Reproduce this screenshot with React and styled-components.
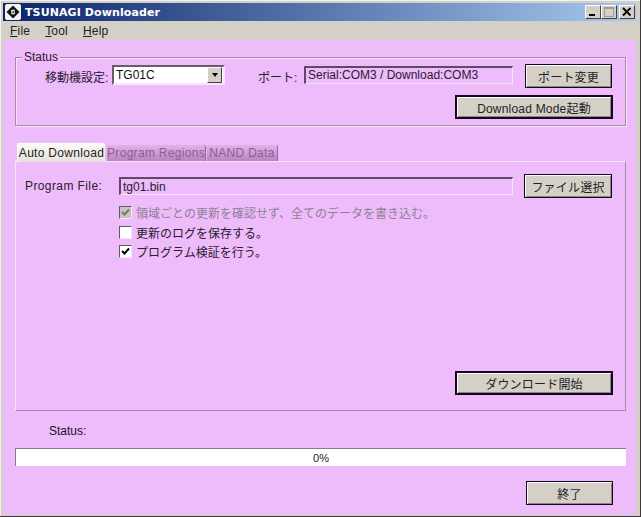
import React from "react";
import styled, { createGlobalStyle } from "styled-components";

const Global = createGlobalStyle`
  html, body { margin: 0; padding: 0; background: #d4d0c8; }
  * { box-sizing: border-box; }
  body { font-family: "Liberation Sans", "Noto Sans CJK JP", sans-serif; font-size: 12px; color: #1a1020; }
`;

const Window = styled.div`
  width: 641px; height: 517px; display: flex; flex-direction: column;
  background: #d4d0c8; padding: 3px 5px 2px 3px;
  box-shadow: inset -1px -1px 0 #3c3838, inset 1px 1px 0 #f4f2ee;
`;
const TitleBar = styled.div`
  height: 18px; flex: none; display: flex; align-items: center; padding: 0 1px 0 1px;
  background: linear-gradient(90deg, #0a246a 0%, #a6caf0 100%);
`;
const TitleText = styled.span`
  font-family: "DejaVu Sans", sans-serif; font-weight: 700; font-size: 11px; color: #fff; margin-left: 3px; letter-spacing: 0.1px;
`;
const Controls = styled.div`
  margin-left: auto; display: flex; align-items: center; margin-right: 0;
`;
const CtlBtn = styled.div`
  width: 16px; height: 14px; margin-left: ${p => p.$gap || 0}px; background: #d4d0c8;
  border: 1px solid; border-color: #fff #404040 #404040 #fff;
  display: flex; align-items: center; justify-content: center;
`;
const MenuBar = styled.div`
  height: 19px; flex: none; display: flex; align-items: center; gap: 15px; padding-left: 7px; background: #d4d0c8;
`;
const MenuItem = styled.span`
  letter-spacing: 0.2px; color: #222;
`;
const Client = styled.div`
  flex: 1; display: flex; flex-direction: column; background: #eebbfb; padding: 17px 10px 10px 12px;
`;
const Group = styled.div`
  position: relative; height: 69px; flex: none; padding: 6px 12px 0 29px;
  border: 1px solid #a58aa8; box-shadow: inset 1px 1px 0 #f8e4fd, 1px 1px 0 #f8e4fd;
`;
const Legend = styled.span`
  position: absolute; left: 6px; top: -7px; padding: 0 2px; background: #eebbfb; line-height: 13px; color: #2a2030;
`;
const StatusRow = styled.div`
  display: flex; align-items: center; height: 24px;
`;
const RightRow = styled.div`
  display: flex; justify-content: flex-end; margin-top: 7px;
`;
const FieldLabel = styled.span`
  width: ${p => p.$w}px; flex: none; white-space: nowrap; color: #2a2030; margin-left: ${p => p.$ml || 0}px; letter-spacing: ${p => p.$ls || 0}px;
`;
const Combo = styled.div`
  width: 113px; height: 20px; flex: none; margin-left: 5px; display: flex; align-items: center; justify-content: space-between;
  background: #fff; border: 2px solid; border-color: #6a5a70 #f8e4fd #f8e4fd #6a5a70; padding: 0 1px 0 2px; color: #111; margin-top: -2px;
`;
const ComboArrow = styled.div`
  width: 15px; height: 16px; background: #d4d0c8; border: 1px solid; border-color: #fff #404040 #404040 #fff;
  display: flex; align-items: center; justify-content: center;
  &::after { content: ""; border: 3.5px solid transparent; border-top: 4px solid #000; border-bottom: 0; }
`;
const ReadOnly = styled.div`
  width: ${p => p.$w}px; height: 18px; flex: none; margin-left: ${p => p.$ml || 0}px; display: flex; align-items: center; padding-left: 2px;
  border: 1px solid; border-top: 2px solid #5e4a68; border-left: 2px solid #5e4a68; border-right-color: #f8e4fd; border-bottom-color: #f8e4fd;
  color: #2a2030; white-space: nowrap; margin-top: ${p => p.$mt || 0}px;
`;
const Button = styled.div`
  width: ${p => p.$w}px; height: 24px; flex: none; margin-left: ${p => p.$ml || 0}px; display: flex; align-items: center; justify-content: center;
  background: #d4d0c8; color: #222; white-space: nowrap; letter-spacing: 0.2px;
  border: ${p => (p.$thick ? 2 : 1)}px solid #14061e; box-shadow: inset 1px 1px 0 #fff, inset -1px -1px 0 #8a8880;
`;
const TabStrip = styled.div`
  display: flex; align-items: flex-end; height: 19px; margin-top: 16px; padding-left: 2px; flex: none;
`;
const ActiveTab = styled.div`
  width: 88px; height: 19px; display: flex; align-items: center; justify-content: center; letter-spacing: 0.3px;
  background: linear-gradient(180deg, #fbfaf6, #e6e2da); border-radius: 2px 2px 0 0; color: #222;
  border-top: 1px solid #fff; border-left: 1px solid #fff; margin-bottom: -1px; position: relative;
`;
const Tab = styled.div`
  width: ${p => p.$w}px; height: 16px; display: flex; align-items: center; justify-content: center; letter-spacing: 0.3px;
  background: linear-gradient(180deg, #e6b0ee, #b485bd); color: #8c5e96; border-radius: 2px 2px 0 0;
  border-left: 1px solid #e0b8e8; border-right: 1px solid #8c6a94; font-size: 12px; margin-left: ${p => p.$ml || 0}px;
`;
const Panel = styled.div`
  height: 250px; flex: none; display: flex; flex-direction: column; padding: 12px 12px 15px 9px;
  border: 1px solid; border-color: #f8e4fd #a58aa8 #a58aa8 #f8e4fd;
`;
const FileRow = styled.div`
  display: flex; align-items: center; height: 24px; flex: none;
`;
const Checks = styled.div`
  display: flex; flex-direction: column; padding-left: 94px; margin-top: 5px;
`;
const CheckRow = styled.div`
  display: flex; align-items: center; height: 19.5px; gap: 4px; color: ${p => (p.$disabled ? "#8f8296" : "#2a2030")};
`;
const Box = styled.div`
  width: 13px; height: 13px; flex: none; display: flex; align-items: center; justify-content: center;
  background: ${p => (p.$disabled ? "#c8c4bc" : "#fff")};
  border: 1px solid; border-color: #5e5a62 #f4e8f6 #f4e8f6 #5e5a62;
`;
const StartRow = styled.div`
  margin-top: auto; display: flex; justify-content: flex-end;
`;
const StatusText = styled.div`
  height: 14px; line-height: 14px; margin-top: 13px; padding-left: 34px; color: #1c1028; flex: none;
`;
const Progress = styled.div`
  height: 18px; margin-top: 10px; flex: none; background: #fff; display: flex; align-items: center; justify-content: center; font-size: 11px; color: #222;
  border-top: 1px solid #8a7a90; border-left: 1px solid #8a7a90;
`;
const Footer = styled.div`
  display: flex; justify-content: flex-end; margin-top: 15px; padding-right: 13px; flex: none;
`;

const Check = ({ color }) => (
  <svg width="9" height="9" viewBox="0 0 9 9"><path d="M1 4 L3.5 6.5 L8 1.5" fill="none" stroke={color} strokeWidth="2" /></svg>
);

export default function App() {
  return (
    <>
      <Global />
      <Window>
        <TitleBar>
          <svg width="18" height="16" viewBox="0 0 18 16">
            <rect x="1" y="0" width="16" height="16" rx="2" fill="#f2f2f2" />
            <path d="M9 1.5 L15.5 8 L9 14.5 L2.5 8 Z" fill="#111" />
            <path d="M7 6 L10.5 5.5 L11 10 L7.5 10.5 Z" fill="#eee" />
            <path d="M8.4 7.2 L9.6 7 L9.8 9 L8.6 9.2 Z" fill="#111" />
          </svg>
          <TitleText>TSUNAGI Downloader</TitleText>
          <Controls>
            <CtlBtn><svg width="10" height="10" viewBox="0 0 10 10"><rect x="1" y="7" width="6" height="2" fill="#000" /></svg></CtlBtn>
            <CtlBtn><svg width="10" height="10" viewBox="0 0 10 10"><rect x="0.5" y="0.5" width="9" height="9" fill="none" stroke="#a09c94" /><rect x="0.5" y="0.5" width="9" height="1.5" fill="#a09c94" /></svg></CtlBtn>
            <CtlBtn $gap={2}><svg width="10" height="10" viewBox="0 0 10 10"><path d="M1 1 L8.5 8.5 M8.5 1 L1 8.5" stroke="#000" strokeWidth="1.8" /></svg></CtlBtn>
          </Controls>
        </TitleBar>
        <MenuBar>
          <MenuItem><u>F</u>ile</MenuItem>
          <MenuItem><u>T</u>ool</MenuItem>
          <MenuItem><u>H</u>elp</MenuItem>
        </MenuBar>
        <Client>
          <Group>
            <Legend>Status</Legend>
            <StatusRow>
              <FieldLabel $w={62}>移動機設定:</FieldLabel>
              <Combo>TG01C<ComboArrow /></Combo>
              <FieldLabel $w={34} $ml={33}>ポート:</FieldLabel>
              <ReadOnly $w={209} $ml={12} $mt={-3}>Serial:COM3 / Download:COM3</ReadOnly>
              <Button $w={87} $ml={12}>ポート変更</Button>
            </StatusRow>
            <RightRow><Button $w={158} $thick>Download Mode起動</Button></RightRow>
          </Group>
          <TabStrip>
            <ActiveTab>Auto Download</ActiveTab>
            <Tab $w={100} $ml={1}>Program Regions</Tab>
            <Tab $w={72}>NAND Data</Tab>
          </TabStrip>
          <Panel>
            <FileRow>
              <FieldLabel $w={94} $ls={0.4}>Program File:</FieldLabel>
              <ReadOnly $w={394}>tg01.bin</ReadOnly>
              <Button $w={88} $ml={11}>ファイル選択</Button>
            </FileRow>
            <Checks>
              <CheckRow $disabled><Box $disabled><Check color="#77757a" /></Box>領域ごとの更新を確認せず、全てのデータを書き込む。</CheckRow>
              <CheckRow><Box />更新のログを保存する。</CheckRow>
              <CheckRow><Box><Check color="#000" /></Box>プログラム検証を行う。</CheckRow>
            </Checks>
            <StartRow><Button $w={158} $thick>ダウンロード開始</Button></StartRow>
          </Panel>
          <StatusText>Status:</StatusText>
          <Progress>0%</Progress>
          <Footer><Button $w={87}>終了</Button></Footer>
        </Client>
      </Window>
    </>
  );
}
